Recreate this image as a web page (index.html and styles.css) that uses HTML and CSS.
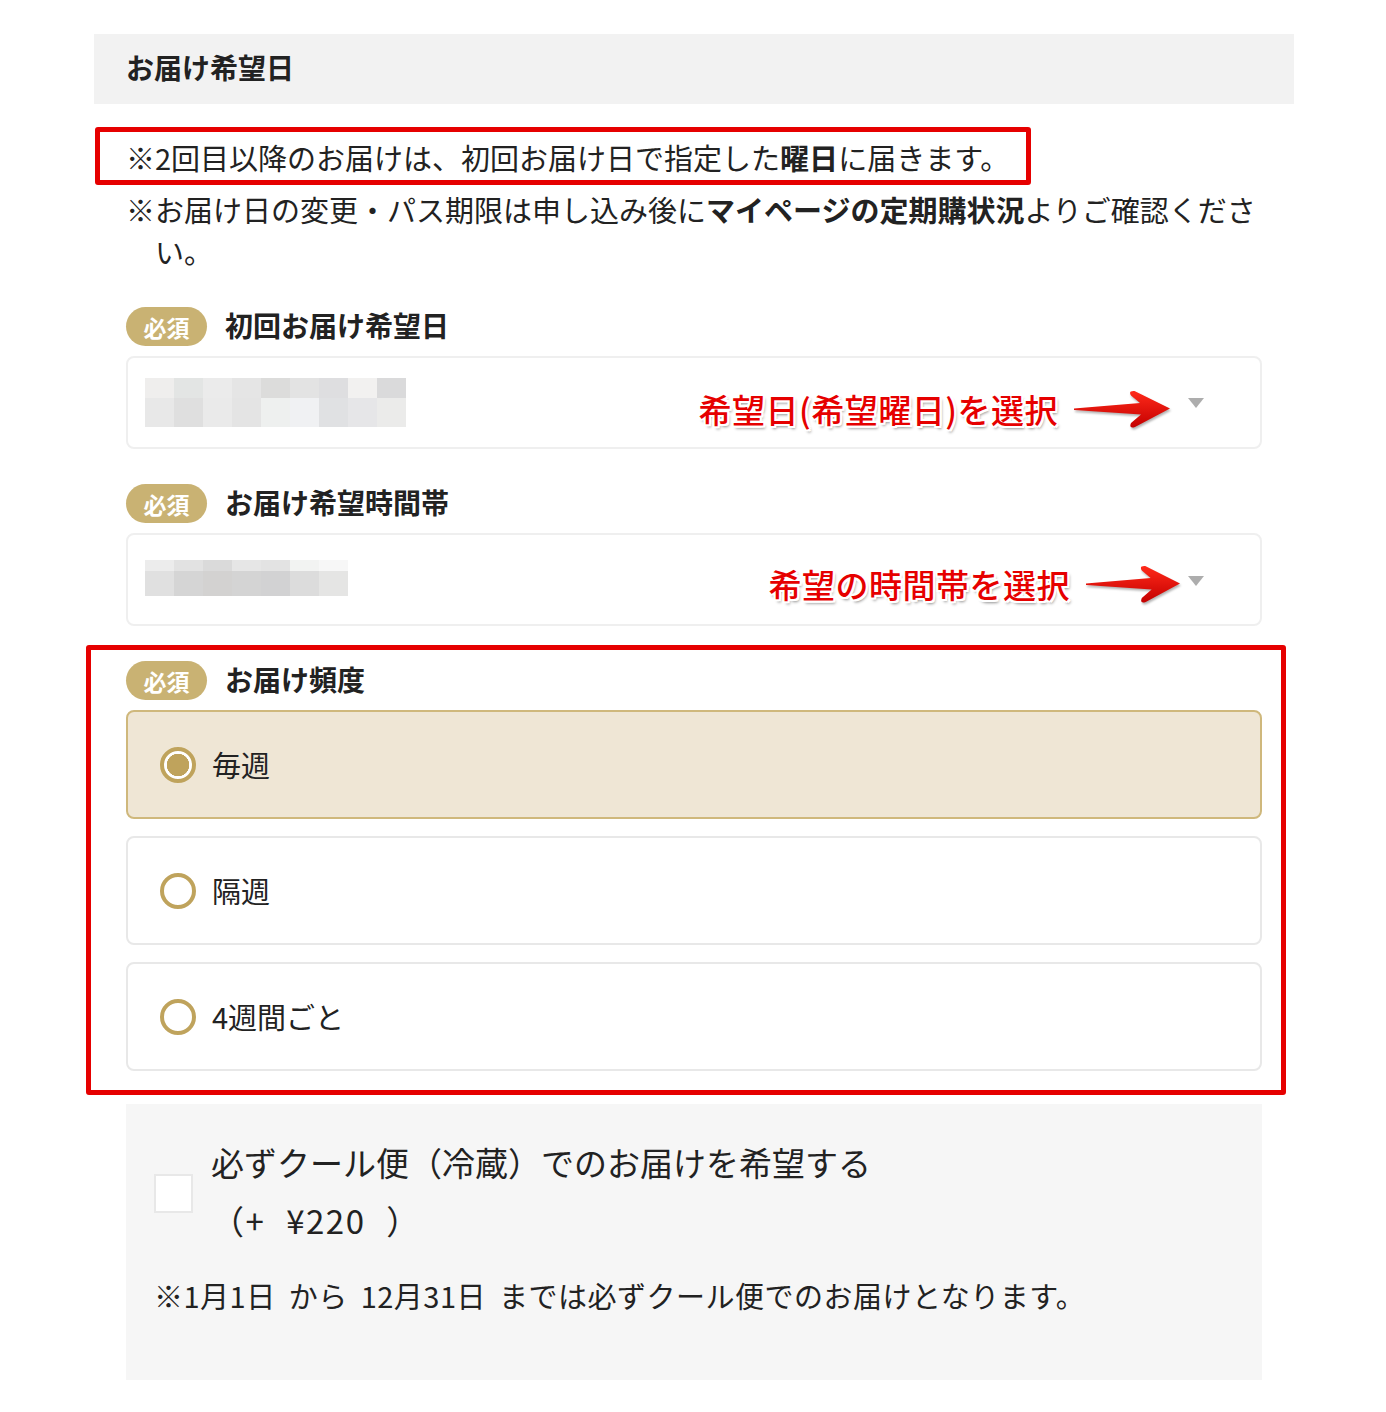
FILE: index.html
```html
<!DOCTYPE html>
<html lang="ja">
<head>
<meta charset="utf-8">
<title>お届け希望日</title>
<link rel="stylesheet" href="styles.css">
</head>
<body>
<div class="page">
  <div class="sec-head"><h2 class="sec-title">お届け希望日</h2></div>
  <div class="sec-body">
    <div class="notes">
      <p class="note hl-note">※2回目以降のお届けは、初回お届け日で指定した<strong>曜日</strong>に届きます。</p>
      <p class="note">※お届け日の変更・パス期限は申し込み後に<strong>マイページの定期購状況</strong>よりご確認ください。</p>
    </div>

    <div class="field">
      <div class="field-label"><span class="badge">必須</span><span class="label-text">初回お届け希望日</span></div>
      <div class="select">
        <div class="mosaic mosaic-a"><div class="m-row r1"></div><div class="m-row r2"></div></div>
        <div class="callout callout-a">
          <span class="callout-text">希望日(希望曜日)を選択</span>
          <svg class="arrow" width="96" height="44" viewBox="0 0 96 44">
            <defs>
              <linearGradient id="ag1" x1="0" y1="0" x2="0" y2="1">
                <stop offset="0" stop-color="#ff2a1a"/>
                <stop offset="1" stop-color="#c40000"/>
              </linearGradient>
            </defs>
            <path d="M0,20.5 L66,15 L57,7.5 Q54,2.5 60.5,3 L96,20.5 L61,39 Q54.5,41 57,35 L67,26.5 L0,22 Z" fill="url(#ag1)"/>
          </svg>
        </div>
        <span class="caret caret-a"></span>
      </div>
    </div>

    <div class="field">
      <div class="field-label"><span class="badge">必須</span><span class="label-text">お届け希望時間帯</span></div>
      <div class="select">
        <div class="mosaic mosaic-b"><div class="m-row r1"></div><div class="m-row r2"></div></div>
        <div class="callout callout-b">
          <span class="callout-text">希望の時間帯を選択</span>
          <svg class="arrow" width="94" height="44" viewBox="0 0 96 44" preserveAspectRatio="none">
            <defs>
              <linearGradient id="ag2" x1="0" y1="0" x2="0" y2="1">
                <stop offset="0" stop-color="#ff2a1a"/>
                <stop offset="1" stop-color="#c40000"/>
              </linearGradient>
            </defs>
            <path d="M0,20.5 L66,15 L57,7.5 Q54,2.5 60.5,3 L96,20.5 L61,39 Q54.5,41 57,35 L67,26.5 L0,22 Z" fill="url(#ag2)"/>
          </svg>
        </div>
        <span class="caret caret-b"></span>
      </div>
    </div>

    <div class="field field-freq hl-box">
      <div class="field-label"><span class="badge">必須</span><span class="label-text">お届け頻度</span></div>
      <div class="options">
        <div class="option is-checked"><span class="radio"></span><span class="option-text">毎週</span></div>
        <div class="option"><span class="radio"></span><span class="option-text">隔週</span></div>
        <div class="option"><span class="radio"></span><span class="option-text">4週間ごと</span></div>
      </div>
    </div>

    <div class="cool">
      <div class="cool-row">
        <span class="checkbox"></span>
        <div class="cool-label">必ずクール便（冷蔵）でのお届けを希望する<br><span class="price">（+ ¥220 ）</span></div>
      </div>
      <p class="cool-note">※1月1日 から 12月31日 までは必ずクール便でのお届けとなります。</p>
    </div>
  </div>
</div>
</body>
</html>
```

FILE: styles.css
```css
* { box-sizing: border-box; }

body {
  margin: 0;
  background: #fff;
  color: #222;
  font-family: "Noto Sans CJK JP", "Noto Sans", sans-serif;
}

.page {
  width: 1200px;
  margin: 34px 0 0 94px;
}

.sec-head {
  height: 70px;
  background: #f2f2f2;
  display: flex;
  align-items: center;
  padding: 0 32px 4px;
}

.sec-title {
  margin: 0;
  font-size: 28px;
  font-weight: 700;
  line-height: 1;
}

.sec-body {
  padding: 0 32px 40px;
}

.notes {
  margin-top: 32px;
}

.note {
  margin: 0;
  font-size: 29px;
  line-height: 42px;
  padding-left: 1em;
  text-indent: -1em;
}

.note + .note { margin-top: 10px; }

.note strong { font-weight: 700; }

.hl-note { position: relative; }

.hl-note::after {
  content: "";
  position: absolute;
  top: -9px;
  bottom: -7px;
  left: -31px;
  right: 231px;
  border: 5px solid #e60000;
  border-radius: 3px;
  pointer-events: none;
}

.field { margin-top: 35px; }

.field-label {
  display: flex;
  align-items: center;
  height: 39px;
}

.badge {
  width: 81px;
  height: 39px;
  border-radius: 20px;
  background: #c9b273;
  color: #fff;
  font-size: 23px;
  font-weight: 700;
  display: flex;
  align-items: center;
  justify-content: center;
}

.label-text {
  margin-left: 18px;
  margin-top: -4px;
  font-size: 28px;
  font-weight: 700;
  line-height: 1;
}

.select {
  margin-top: 10px;
  height: 93px;
  border: 2px solid #efefef;
  border-radius: 8px;
  display: flex;
  align-items: center;
  padding: 0 56px 0 17px;
}

.mosaic { display: flex; flex-direction: column; }

.mosaic-a { width: 261px; }
.mosaic-a .r1 {
  height: 20px;
  background: linear-gradient(to right,
    #efeeed 0 29px, #e3e5e4 29px 58px, #ebebeb 58px 87px, #e5e5e5 87px 116px,
    #dcdcdb 116px 145px, #e3e3e3 145px 174px, #dedee0 174px 203px,
    #f2f1f0 203px 232px, #dadadb 232px 261px);
}
.mosaic-a .r2 {
  height: 29px;
  background: linear-gradient(to right,
    #e8e8e8 0 29px, #dfdfdf 29px 58px, #eaeaea 58px 87px, #e4e4e4 87px 116px,
    #eef0ef 116px 145px, #f0f1f3 145px 174px, #e0e1e3 174px 203px,
    #e6e6e8 203px 232px, #ebebea 232px 261px);
}

.mosaic-b { width: 203px; margin-top: -4px; }
.mosaic-b .r1 {
  height: 11px;
  background: linear-gradient(to right,
    #ececec 0 29px, #e2e2e2 29px 58px, #dadada 58px 87px, #e6e6e6 87px 116px,
    #e3e3e3 116px 145px, #f2f3f2 145px 174px, #f7f7f7 174px 203px);
}
.mosaic-b .r2 {
  height: 25px;
  background: linear-gradient(to right,
    #e0e0e0 0 29px, #d5d5d5 29px 58px, #d3d2d1 58px 87px, #d4d4d4 87px 116px,
    #d2d2d3 116px 145px, #dcdcdc 145px 174px, #e5e5e4 174px 203px);
}

.callout {
  margin-left: auto;
  display: flex;
  align-items: center;
  gap: 16px;
}

.callout-a { margin-top: 14px; }
.callout-b { margin-top: 10px; }

.callout-text {
  color: #e60000;
  font-size: 33px;
  font-weight: 500;
  line-height: 1;
  letter-spacing: 0.5px;
  text-shadow:
    2px 0 #fff, -2px 0 #fff, 0 2px #fff, 0 -2px #fff,
    2px 2px #fff, -2px -2px #fff, 2px -2px #fff, -2px 2px #fff,
    2px 3px 3px rgba(0, 0, 0, 0.45);
}

.arrow {
  display: block;
  filter: drop-shadow(1px 2px 1px rgba(0, 0, 0, 0.3));
}

.caret {
  width: 0;
  height: 0;
  border-left: 8px solid transparent;
  border-right: 8px solid transparent;
  border-top: 10px solid #adadad;
}

.caret-a { margin-left: 18px; }
.caret-b { margin-left: 8px; margin-top: 2px; }

.hl-box { position: relative; }

.hl-box::after {
  content: "";
  position: absolute;
  top: -16px;
  bottom: -24px;
  left: -40px;
  right: -24px;
  border: 5px solid #e60000;
  border-radius: 3px;
  pointer-events: none;
}

.options {
  margin-top: 10px;
  display: flex;
  flex-direction: column;
  gap: 17px;
}

.option {
  height: 109px;
  border: 2px solid #e8e8e8;
  border-radius: 8px;
  background: #fff;
  display: flex;
  align-items: center;
  padding-left: 32px;
}

.option.is-checked {
  background: #efe6d5;
  border-color: #cfb87c;
}

.radio {
  width: 36px;
  height: 36px;
  border: 4px solid #bfa35c;
  border-radius: 50%;
  background: #fff;
  flex: none;
}

.is-checked .radio {
  background: radial-gradient(circle, #bfa35c 0 11px, #fff 11.5px);
}

.option-text {
  margin-left: 16px;
  font-size: 29px;
  line-height: 1;
}

.cool {
  margin-top: 33px;
  background: #f6f6f6;
  padding: 29px 28px 64px;
}

.cool-row {
  display: flex;
  align-items: center;
}

.checkbox {
  width: 39px;
  height: 39px;
  background: #fff;
  border: 2px solid #e8e8e8;
  flex: none;
  margin-top: 4px;
}

.cool-label {
  margin-left: 18px;
  font-size: 33px;
  line-height: 58px;
}

.price {
  letter-spacing: 1.5px;
  word-spacing: 12px;
}

.cool-note {
  margin: 25px 0 0;
  font-size: 29px;
  line-height: 42px;
  letter-spacing: 0.5px;
  word-spacing: 6px;
}
```
